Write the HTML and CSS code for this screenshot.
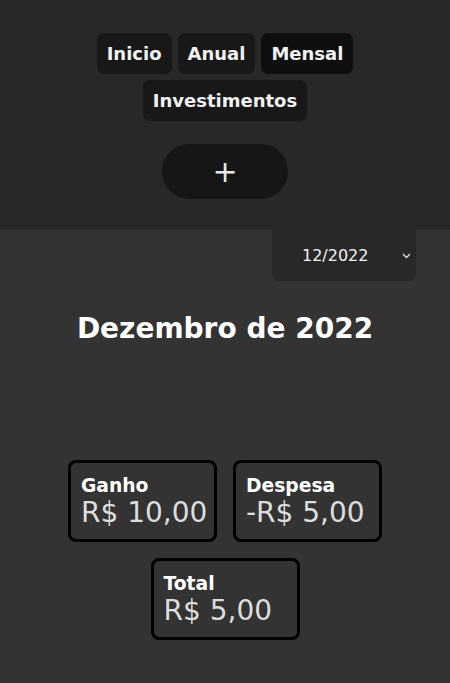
FILE: index.html
```html
<!DOCTYPE html>
<html lang="pt-BR">
<head>
<meta charset="utf-8">
<title>Mensal</title>
<link rel="stylesheet" href="styles.css">
</head>
<body>
<header class="top">
  <nav class="nav">
    <a class="nav-btn">Inicio</a>
    <a class="nav-btn">Anual</a>
    <a class="nav-btn active">Mensal</a>
    <a class="nav-btn">Investimentos</a>
  </nav>
  <button class="add-btn" type="button">+</button>
</header>
<main class="content">
  <div class="select-row">
    <div class="month-select">
      <span class="month-value">12/2022</span>
      <svg class="chev" width="9" height="6" viewBox="0 0 9 6"><path d="M1 1 L4.5 4.5 L8 1" fill="none" stroke="#e0e0e0" stroke-width="1.3"/></svg>
    </div>
  </div>
  <h1 class="title">Dezembro de 2022</h1>
  <section class="cards">
    <div class="card"><span class="card-label">Ganho</span><span class="card-value">R$ 10,00</span></div>
    <div class="card"><span class="card-label">Despesa</span><span class="card-value">-R$ 5,00</span></div>
    <div class="card"><span class="card-label">Total</span><span class="card-value">R$ 5,00</span></div>
  </section>
</main>
</body>
</html>
```
FILE: styles.css
```css
html, body {
  margin: 0;
  padding: 0;
}
body {
  background: #333333;
  font-family: "DejaVu Sans", sans-serif;
  color: #ffffff;
  width: 450px;
  min-height: 683px;
}
.top {
  background: #282828;
  padding: 33px 0 31px;
  display: flex;
  flex-direction: column;
  align-items: center;
}
.nav {
  width: 280px;
  display: flex;
  flex-wrap: wrap;
  justify-content: center;
  gap: 6px;
}
.nav-btn {
  background: #181818;
  color: #f2f2f2;
  font-weight: bold;
  font-size: 18px;
  line-height: 21px;
  padding: 10px 10px;
  border-radius: 7px;
  cursor: pointer;
}
.nav-btn.active {
  background: #0f0f0f;
}
.add-btn {
  margin-top: 23px;
  width: 126px;
  height: 55px;
  border: none;
  border-radius: 28px;
  background: #161616;
  color: #e8e8e8;
  font-family: "DejaVu Sans", sans-serif;
  font-size: 30px;
  font-weight: normal;
  line-height: 1;
  padding: 0;
}
.select-row {
  display: flex;
  justify-content: flex-end;
  padding-right: 34px;
}
.month-select {
  width: 144px;
  height: 51px;
  box-sizing: border-box;
  background: #282828;
  border-radius: 0 0 8px 8px;
  display: flex;
  align-items: center;
  padding: 0 5px 0 30px;
  color: #f0f0f0;
  font-size: 16px;
}
.month-value {
  flex: 1;
}
.chev {
  display: block;
}
.title {
  margin: 31px 0 0;
  text-align: center;
  font-size: 28px;
  font-weight: bold;
  line-height: 33px;
}
.cards {
  margin: 115px auto 0;
  width: 330px;
  display: flex;
  flex-wrap: wrap;
  justify-content: center;
  gap: 16px;
}
.card {
  width: 149px;
  height: 82px;
  box-sizing: border-box;
  border: 3px solid #000;
  border-radius: 8px;
  padding: 12px 0 0 10px;
  display: flex;
  flex-direction: column;
  white-space: nowrap;
}
.card-label {
  font-size: 18.72px;
  font-weight: bold;
  line-height: 21px;
  color: #fff;
}
.card-value {
  font-size: 28px;
  line-height: 34px;
  color: #dddddd;
}
```
